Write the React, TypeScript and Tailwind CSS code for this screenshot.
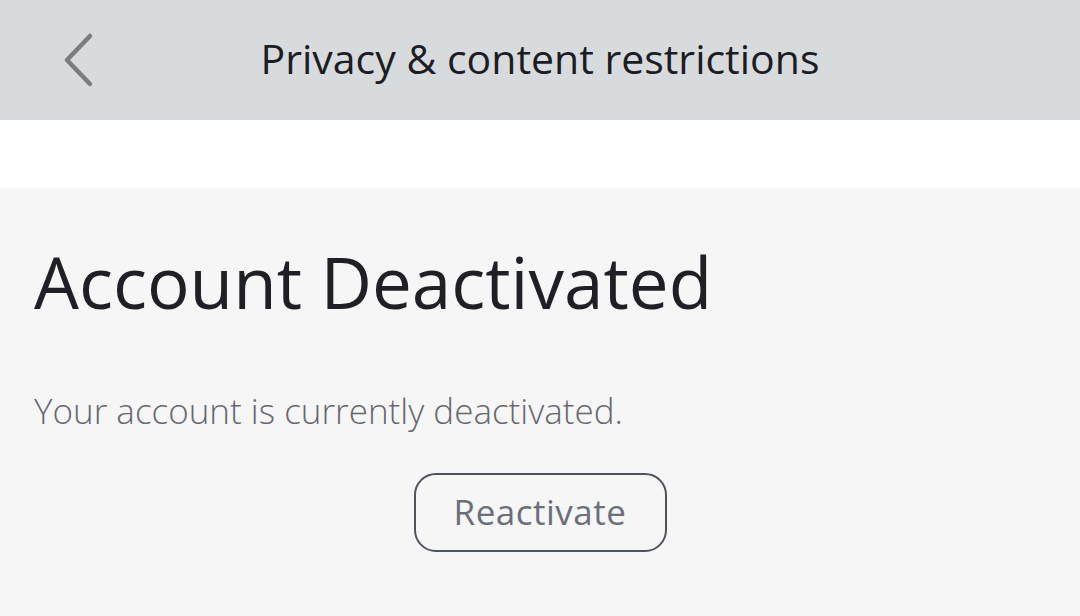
import React from "react";

export default function App() {
  return (
    <div
      className="w-[1080px] h-[616px] flex flex-col bg-[#f6f6f6] overflow-hidden"
      style={{ fontFamily: '"Open Sans", "Noto Sans", sans-serif' }}
    >
      <div className="h-[120px] bg-[#d8dbde] flex items-center relative shrink-0">
        <div className="w-[170px] pl-[60px] flex items-center">
          <svg width="36" height="56" viewBox="0 0 36 56" fill="none">
            <path
              d="M30 4 L7 28 L30 52"
              stroke="#7b7c7f"
              strokeWidth="4.5"
              strokeLinecap="round"
              strokeLinejoin="round"
            />
          </svg>
        </div>
        <div className="absolute left-0 right-0 top-0 h-full flex items-center justify-center">
          <span className="text-[41px] text-[#1c1d22] pl-[0px] mb-[2px]">
            Privacy &amp; content restrictions
          </span>
        </div>
      </div>
      <div className="h-[68px] bg-white shrink-0" />
      <div className="flex flex-col px-[34px] pt-[44px]">
        <h1 className="text-[71px] leading-[100px] text-[#1f2026] font-normal">
          Account Deactivated
        </h1>
        <p className="mt-[54px] text-[35px] leading-[50px] font-light text-[#66686f]">
          Your account is currently deactivated.
        </p>
        <div className="flex justify-center mt-[37px]">
          <button className="w-[253px] h-[79px] rounded-[22px] border-2 border-[#4f535c] text-[35px] tracking-[0.5px] font-medium text-[#6b6f7a]">
            Reactivate
          </button>
        </div>
      </div>
    </div>
  );
}
